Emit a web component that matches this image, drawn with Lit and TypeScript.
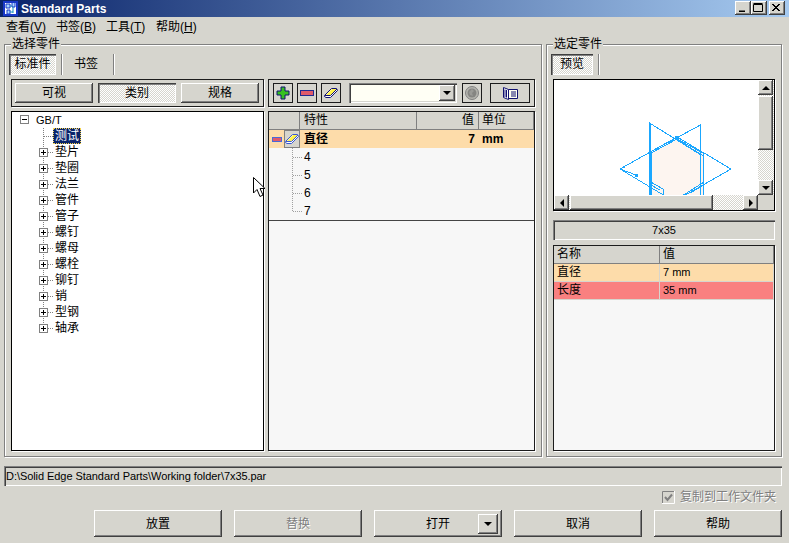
import { LitElement, html, css, svg } from "lit";
import { customElement } from "lit/decorators.js";

const TREE = ["垫片", "垫圈", "法兰", "管件", "管子", "螺钉", "螺母", "螺栓", "铆钉", "销", "型钢", "轴承"];

const plusBox = (x: number, y: number) => svg`
  <rect x=${x + 0.5} y=${y + 0.5} width="8" height="8" fill="#fff" stroke="#808080"/>
  <path d="M${x + 2} ${y + 4.5}h5M${x + 4.5} ${y + 2}v5" stroke="#000"/>`;

const eraser = (line: string) => svg`
  <path d="M.5 8.500 7.500 1.500H12.500L13.500 3.500 6.500 10.500H2L.5 9.500z" fill="#fff" stroke=${line}/>
  <path d="M2 8 8 2H13L7 8z" fill="#fff24a"/>
  <path d="M1 8.500H6.500L13 2" fill="none" stroke=${line}/>`;

@customElement("app-root")
export class AppRoot extends LitElement {
  static styles = css`
    :host {
      display: block;
      position: relative;
      width: 789px;
      height: 543px;
      overflow: hidden;
      background: #d6d5ce;
      color: #000;
      font: 12px/16px "Liberation Sans", "Noto Sans CJK SC", sans-serif;
    }
    * { box-sizing: border-box; }
    .title {
      height: 17px;
      display: flex;
      align-items: center;
      padding: 0 4px 0 3px;
      background: linear-gradient(90deg, #0a246a, #a6caf0);
      color: #fff;
      font: bold 12px "Liberation Sans", sans-serif;
    }
    .title svg { flex: none; margin-right: 3px; }
    .title .name { flex: 1; }
    .wb {
      width: 16px;
      height: 14px;
      margin-top: -2px;
      background: #d6d5ce;
      box-shadow: inset -1px -1px #404040, inset 1px 1px #fff, inset -2px -2px #808080;
      display: grid;
      place-items: center;
    }
    .wb.close { margin-left: 2px; }
    .menu {
      height: 20px;
      display: flex;
      align-items: center;
      padding-left: 6px;
      gap: 11px;
    }
    .menu span { width: 39px; white-space: nowrap; }
    .groups {
      display: flex;
      gap: 4px;
      padding-left: 4px;
      height: 420px;
    }
    fieldset {
      margin: 0;
      min-width: 0;
      padding: 3px 6px 5px;
      height: 420px;
      border: 1px solid #808080;
      box-shadow: 1px 1px 0 #fff, inset 1px 1px 0 #fff;
    }
    legend {
      padding: 0 1px;
      line-height: 14px;
      background: #d6d5ce;
    }
    fieldset.left { width: 538px; }
    fieldset.right { width: 236px; }
    .tabs {
      height: 21px;
      display: flex;
      align-items: stretch;
    }
    .tab {
      display: grid;
      place-items: center;
      padding-bottom: 1px;
    }
    .tab.active {
      width: 47px;
      margin-left: -2px;
      margin-right: 5px;
      height: 21px;
      background: repeating-conic-gradient(#fff 0 25%, #d6d5ce 0 50%) 0 0/2px 2px;
      box-shadow: inset 1px 1px #404040, inset 2px 2px #808080, inset -1px -1px #fff;
    }
    .tab.pre { width: 42px; }
    .tab.plain { width: 50px; padding-right: 4px; }
    .tsep {
      width: 2px;
      background: linear-gradient(90deg, #808080 50%, #fff 50%);
    }
    .work {
      margin-top: 4px;
      display: grid;
      grid-template-columns: 253px 267px;
      grid-template-rows: 28px 340px;
      gap: 4px;
    }
    .bar {
      border: 1px solid #1c1c1c;
      box-shadow: 1px 1px 0 #fff;
      display: flex;
      align-items: center;
    }
    .bar.views { gap: 5px; padding: 0 4px 0 3px; }
    .vbtn {
      flex: 1;
      height: 20px;
      display: grid;
      place-items: center;
      background: #d6d5ce;
      box-shadow: inset -1px -1px #404040, inset 1px 1px #fff, inset -2px -2px #808080;
    }
    .vbtn.on {
      background: repeating-conic-gradient(#fff 0 25%, #d6d5ce 0 50%) 0 0/2px 2px;
      box-shadow: inset 1px 1px #404040, inset 2px 2px #808080, inset -1px -1px #fff;
    }
    .bar.tools { padding-left: 4px; }
    .ibtn {
      width: 20px;
      height: 20px;
      border: 1px solid #1c1c1c;
      display: grid;
      place-items: center;
      margin-right: 4px;
      flex: none;
    }
    .ibtn.wide { width: 40px; margin-left: 4px; margin-right: 0; }
    .ibtn svg { display: block; }
    .combo {
      width: 108px;
      height: 20px;
      margin: 0 5px 0 4px;
      background: #fffff5;
      box-shadow: inset 1px 1px #808080, inset 2px 2px #404040, inset -1px -1px #fff, inset -2px -2px #d6d5ce;
      display: flex;
      justify-content: flex-end;
      padding: 2px;
      flex: none;
    }
    .combo i, .opn-drop {
      display: grid;
      place-items: center;
      background: #d6d5ce;
      box-shadow: inset -1px -1px #404040, inset 1px 1px #fff, inset -2px -2px #808080;
    }
    .combo i { width: 16px; }
    .tree {
      border: 1px solid #000;
      box-shadow: 1px 1px 0 #fff;
      background: #fff;
      overflow: hidden;
    }
    .row {
      height: 16px;
      display: flex;
      align-items: center;
      white-space: nowrap;
    }
    .row svg { flex: none; display: block; }
    .row.root { padding-left: 8px; gap: 6px; font-size: 11px; }
    .row.kid { padding-left: 21px; }
    .sel {
      background: #0a246a;
      color: #fff;
      padding: 0 2px;
      margin-left: -2px;
      height: 16px;
      outline: 1px dotted #f4d24a;
      outline-offset: -1px;
    }
    .grid {
      border: 1px solid #1c1c1c;
      box-shadow: 1px 1px 0 #fff;
      background: #f7f7f7;
      overflow: hidden;
    }
    .hdr {
      display: grid;
      background: #d6d5ce;
      height: 18px;
    }
    .hdr span {
      padding-left: 3px;
      line-height: 17px;
      border-right: 1px solid #808080;
      border-bottom: 1px solid #808080;
    }
    .g4 { grid-template-columns: 31px 117px 62px 55px; }
    .g4 span:nth-child(2) { padding-left: 4px; }
    .hdr span.r { text-align: right; padding-right: 4px; }
    .main {
      display: grid;
      grid-template-columns: 31px 117px 62px 55px;
      height: 18px;
      background: #fddcaa;
      font-weight: bold;
      line-height: 18px;
    }
    .main .ic { display: flex; align-items: center; gap: 2px; padding-left: 3px; }
    .main .er {
      width: 16px;
      height: 18px;
      background: #d6d5ce;
      box-shadow: inset 0 0 0 1px #808080;
      display: grid;
      place-items: center;
    }
    .main b { padding-left: 3px; font-weight: bold; }
    .main b.key { padding-left: 4px; }
    .main b.r { text-align: right; padding-right: 4px; }
    .subs { border-bottom: 1px solid #444; height: 73px; }
    .sub {
      height: 18px;
      display: flex;
      align-items: center;
      padding-left: 20px;
    }
    .sub svg { flex: none; display: block; margin-right: 1px; }
    .preview {
      margin-top: 4px;
      height: 132px;
      border: 1px solid #000;
      box-shadow: 1px 1px 0 #fff;
      display: grid;
      grid-template-columns: 204px 16px;
      grid-template-rows: 115px 15px;
      background: #d6d5ce;
    }
    .canvas { background: #fff; overflow: hidden; }
    .canvas svg { display: block; }
    .sb {
      display: flex;
      background: repeating-conic-gradient(#fff 0 25%, #d6d5ce 0 50%) 0 0/2px 2px;
    }
    .sb.v { flex-direction: column; }
    .sb.v .arrow { height: 15px; width: 15px; }
    .sb.h .arrow { width: 15px; height: 15px; }
    .arrow, .thumb {
      display: grid;
      place-items: center;
      background: #d6d5ce;
      box-shadow: inset -1px -1px #404040, inset 1px 1px #fff, inset -2px -2px #808080;
      flex: none;
    }
    .sb.v .thumb { height: 54px; width: 15px; margin-top: 1px; }
    .sb.h .thumb { width: 143px; height: 15px; margin-left: 1px; }
    .sb .grow { flex: 1; }
    .partname {
      margin-top: 9px;
      height: 20px;
      text-align: center;
      line-height: 20px;
      box-shadow: inset 1px 1px #808080, inset 2px 2px #404040, inset -1px -1px #fff;
      font-size: 11px;
    }
    .props {
      margin-top: 5px;
      height: 206px;
      border: 1px solid #1c1c1c;
      box-shadow: 1px 1px 0 #fff;
      background: #f7f7f7;
      overflow: hidden;
    }
    .props .hdr { grid-template-columns: 106px 114px; }
    .prow {
      display: grid;
      grid-template-columns: 106px 114px;
      height: 18px;
      line-height: 17px;
      border-bottom: 1px solid #d6d5ce;
    }
    .prow span {
      padding-left: 3px;
      border-right: 1px solid #d6d5ce;
    }
    .prow .val { font-size: 11px; }
    .orange { background: #fddcaa; }
    .red { background: #f98080; }
    .path {
      margin: 9px 7px 0 4px;
      height: 20px;
      padding-left: 2px;
      box-shadow: inset 1px 1px #808080, inset 2px 2px #404040, inset -1px -1px #fff;
      font-size: 11px;
      line-height: 20px;
      letter-spacing: -0.06px;
      white-space: nowrap;
    }
    .check {
      height: 24px;
      padding: 0 13px 2px 0;
      display: flex;
      justify-content: flex-end;
      align-items: center;
      gap: 5px;
      color: #808080;
      text-shadow: 1px 1px 0 #fff;
    }
    .check svg { display: block; }
    .actions {
      display: flex;
      gap: 12px;
      padding-left: 94px;
    }
    .act {
      position: relative;
      width: 128px;
      height: 27px;
      display: grid;
      place-items: center;
      background: #d6d5ce;
      box-shadow: inset -1px -1px #404040, inset 1px 1px #fff, inset -2px -2px #808080;
    }
    .act.off { color: #808080; text-shadow: 1px 1px 0 #fff; }
    .opn-drop {
      position: absolute;
      left: 104px;
      top: 4px;
      width: 20px;
      height: 20px;
    }
    .cursor {
      position: absolute;
      left: 253px;
      top: 177px;
      pointer-events: none;
    }
  `;

  private tri(dir: "u" | "d" | "l" | "r") {
    const d = { u: "M0 4 4 0 8 4z", d: "M0 0h8L4 4z", l: "M4 0v8L0 4z", r: "M0 0v8l4-4z" }[dir];
    const horiz = dir === "u" || dir === "d";
    return html`<svg width=${horiz ? 8 : 4} height=${horiz ? 4 : 8} viewBox="0 0 ${horiz ? 8 : 4} ${horiz ? 4 : 8}"><path d=${d} fill="#000"/></svg>`;
  }

  private treeRow(name: string, i: number) {
    const last = i === TREE.length - 1;
    return html`<div class="row kid">
      <svg width="22" height="16" viewBox="0 0 22 16">
        <path d=${last ? "M10.500 0V8" : "M10.500 0V16"} stroke="#808080" stroke-dasharray="1 1"/>
        <path d="M15 8.500H21" stroke="#808080" stroke-dasharray="1 1"/>
        ${plusBox(6, 4)}
      </svg>
      <span>${name}</span>
    </div>`;
  }

  render() {
    return html`
      <div class="title">
        <svg width="15" height="15" viewBox="0 0 15 15">
          <rect width="15" height="15" fill="#1838c8"/>
          <rect x="2" y="2" width="11" height="11" fill="#fff"/>
          <path d="M3 3h4v4H3zM9 2v4h3V2M4 9h3v4H4z" fill="#a8d8ff" stroke="#1838c8"/>
          <path d="M7 5h2M10 6v6M7 11h3" stroke="#1090c0"/>
        </svg>
        <span class="name">Standard Parts</span>
        <span class="wb"><svg width="8" height="8"><path d="M1 6.500h6V8H1z" fill="#000"/></svg></span>
        <span class="wb"><svg width="10" height="9"><path d="M.5 1.500h9v7h-9zM.5 .5h9" fill="none" stroke="#000"/></svg></span>
        <span class="wb close"><svg width="8" height="7"><path d="M0 0 7 7M1 0 8 7M7 0 0 7M8 0 1 7" stroke="#000"/></svg></span>
      </div>
      <div class="menu">
        <span>查看(<u>V</u>)</span><span>书签(<u>B</u>)</span><span>工具(<u>T</u>)</span><span>帮助(<u>H</u>)</span>
      </div>
      <div class="groups">
        <fieldset class="left">
          <legend>选择零件</legend>
          <div class="tabs">
            <div class="tab active">标准件</div>
            <div class="tsep"></div>
            <div class="tab plain">书签</div>
            <div class="tsep"></div>
          </div>
          <div class="work">
            <div class="bar views">
              <div class="vbtn">可视</div><div class="vbtn on">类别</div><div class="vbtn">规格</div>
            </div>
            <div class="bar tools">
              <div class="ibtn">
                <svg width="16" height="16" viewBox="0 0 16 16"><path d="M6 2h4v4h4v4h-4v4H6v-4H2V6h4z" fill="#35c020" stroke="#101070"/></svg>
              </div>
              <div class="ibtn">
                <svg width="14" height="6" viewBox="0 0 14 6"><rect x=".5" y=".5" width="13" height="5" fill="#e05a6a" stroke="#202a90"/></svg>
              </div>
              <div class="ibtn"><svg width="14" height="12" viewBox="0 0 14 12">${eraser("#101070")}</svg></div>
              <div class="combo"><i>${this.tri("d")}</i></div>
              <div class="ibtn">
                <svg width="14" height="14" viewBox="0 0 14 14"><circle cx="7" cy="7" r="6.500" fill="#b4b4ae" stroke="#808080"/><circle cx="7" cy="7" r="4.500" fill="#858582"/><path d="M7 3 9 5 7 7 8 10 5 9 4 6z" fill="#9a9a96"/></svg>
              </div>
              <div class="ibtn wide">
                <svg width="15" height="13" viewBox="0 0 15 13">
                  <path d="M5.500 2.500H14.500V11.500H5.500z" fill="#fffff0" stroke="#101070"/>
                  <path d="M.5 .5 5.500 2.500V12.500L.5 10.500z" fill="#fff" stroke="#101070"/>
                  <path d="M2 2.500V10M3.500 3V10.500M8 5h5M8 7h5M8 9h5" stroke="#101070"/>
                </svg>
              </div>
            </div>
            <div class="tree">
              <div class="row root">
                <svg width="10" height="16" viewBox="0 0 10 16">
                  <rect x=".5" y="3.500" width="8" height="8" fill="#fff" stroke="#808080"/>
                  <path d="M2 7.500h5" stroke="#000"/>
                </svg>
                <span>GB/T</span>
              </div>
              <div class="row kid">
                <svg width="22" height="16" viewBox="0 0 22 16"><path d="M10.500 0V16M11 8.500H21" stroke="#808080" stroke-dasharray="1 1"/></svg>
                <span class="sel">测试</span>
              </div>
              ${TREE.map((n, i) => this.treeRow(n, i))}
            </div>
            <div class="grid">
              <div class="hdr g4"><span></span><span>特性</span><span class="r">值</span><span>单位</span></div>
              <div class="main">
                <div class="ic">
                  <svg width="10" height="5" viewBox="0 0 10 5"><rect x=".5" y=".5" width="9" height="4" fill="#e05a6a" stroke="#4a68d8"/></svg>
                  <div class="er"><svg width="14" height="12" viewBox="0 0 14 12">${eraser("#3a58d0")}</svg></div>
                </div>
                <b class="key">直径</b><b class="r">7</b><b>mm</b>
              </div>
              <div class="subs">
                ${["4", "5", "6", "7"].map(
                  (v, i) => html`<div class="sub">
                    <svg width="14" height="18" viewBox="0 0 14 18">
                      <path d=${i === 3 ? "M3.500 0V9.500H14" : "M3.500 0V18M4 9.500H14"} fill="none" stroke="#a0a0a0" stroke-dasharray="1 1"/>
                    </svg>
                    <span>${v}</span>
                  </div>`
                )}
              </div>
            </div>
          </div>
        </fieldset>
        <fieldset class="right">
          <legend>选定零件</legend>
          <div class="tabs">
            <div class="tab active pre">预览</div>
            <div class="tsep"></div>
          </div>
          <div class="preview">
            <div class="canvas">
              <svg width="204" height="115" viewBox="554 80 204 115" shape-rendering="crispEdges" fill="none" stroke="#1aa7ff">
                <path d="M677 139 703 153V196H650V153z" fill="#fdf5f0" stroke="none"/>
                <path d="M620 169 677 137 731 169 682 197M620 169 665 196M620 169 636 175"/>
                <path d="M649.500 196V123L701 155M650.500 196V123M700.500 196V125L650 152"/>
                <path d="M651 196V153L677 139 703 153V196M677 140 704 156"/>
                <path d="M649 181 663 189V196M649 184 660 190M704 182 682 196M702 186 690 193"/>
                <path d="M675 136h4v3h-4zM635 174h3v3h-3zM620 168h2v2h-2zM623 166h2v2h-2z" fill="#1aa7ff" stroke="none"/>
              </svg>
            </div>
            <div class="sb v">
              <div class="arrow">${this.tri("u")}</div>
              <div class="thumb"></div>
              <div class="grow"></div>
              <div class="arrow">${this.tri("d")}</div>
            </div>
            <div class="sb h">
              <div class="arrow">${this.tri("l")}</div>
              <div class="thumb"></div>
              <div class="grow"></div>
              <div class="arrow">${this.tri("r")}</div>
            </div>
            <div></div>
          </div>
          <div class="partname">7x35</div>
          <div class="props">
            <div class="hdr"><span>名称</span><span>值</span></div>
            <div class="prow orange"><span>直径</span><span class="val">7 mm</span></div>
            <div class="prow red"><span>长度</span><span class="val">35 mm</span></div>
          </div>
        </fieldset>
      </div>
      <div class="path">D:\\Solid Edge Standard Parts\\Working folder\\7x35.par</div>
      <div class="check">
        <svg width="13" height="13" viewBox="0 0 13 13">
          <rect width="13" height="13" fill="#d6d5ce"/>
          <path d="M.5 13V.5H13" fill="none" stroke="#808080"/>
          <path d="M12.500 0V12.500H0" fill="none" stroke="#fff"/>
          <path d="M3 6 5.500 9 10 3.500" fill="none" stroke="#808080" stroke-width="2"/>
        </svg>
        <span>复制到工作文件夹</span>
      </div>
      <div class="actions">
        <div class="act">放置</div>
        <div class="act off">替换</div>
        <div class="act">打开<span class="opn-drop">${this.tri("d")}</span></div>
        <div class="act">取消</div>
        <div class="act">帮助</div>
      </div>
      <svg class="cursor" width="13" height="22" viewBox="0 0 13 22">
        <path d="M.5 .5V16L4 12.500 7 19.500 10 18 7 11.500H12z" fill="#fff" stroke="#000"/>
      </svg>
    `;
  }
}
